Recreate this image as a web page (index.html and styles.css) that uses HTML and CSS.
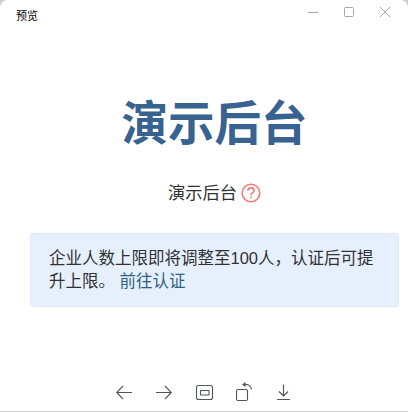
FILE: index.html
```html
<!DOCTYPE html>
<html lang="zh-CN">

<head>
  <meta charset="UTF-8" />
  <title>预览</title>
  <link rel="stylesheet" href="styles.css">
</head>

<body>
  <div class="window">
    <div class="titlebar">
      <span class="title">预览</span>
      <div class="controls">
        <svg width="12" height="12" viewBox="0 0 12 12"><path d="M1 6.500h10" /></svg>
        <svg width="12" height="12" viewBox="0 0 12 12"><rect x="1.500" y="1.500" width="9" height="9" rx="1" /></svg>
        <svg width="12" height="12" viewBox="0 0 12 12"><path d="M1 1l10 10M11 1L1 11" /></svg>
      </div>
    </div>

    <div class="content">
      <h1 class="brand">演示后台</h1>
      <div class="subtitle">
        <span>演示后台</span>
        <svg class="help" width="20" height="20" viewBox="0 0 20 20">
          <circle cx="10" cy="10" r="8.800" />
          <path d="M7 7.800c0-1.800 1.300-2.900 3.100-2.900s3 1.100 3 2.600c0 2.200-3.100 2.200-3.100 4.700" />
          <path d="M10 13.400v1.800" />
        </svg>
      </div>
      <div class="notice">企业人数上限即将调整至100人，认证后可提升上限。 <a class="notice-link">前往认证</a></div>
    </div>

    <div class="toolbar">
      <svg width="16" height="18" viewBox="0 0 16 18"><path d="M16 9.500H.7M7 3L.7 9.500 7 16" /></svg>
      <svg width="16" height="18" viewBox="0 0 16 18"><path d="M0 9.500h15.300M9 3l6.300 6.500L9 16" /></svg>
      <svg width="16" height="18" viewBox="0 0 16 18"><rect x=".5" y="2.500" width="16" height="14" rx="2" /><rect x="4.500" y="7.500" width="8.500" height="4.500" rx=".5" /></svg>
      <svg width="16" height="18" viewBox="0 0 16 18"><rect x=".5" y="6.500" width="11" height="11" rx="1.500" /><path d="M8 1.500c4-.5 7 1.500 7.500 5" /><path class="solid" d="M9.500 -1L6 1.500l3.500 2.500z" /></svg>
      <svg width="16" height="18" viewBox="0 0 16 18"><path d="M7.500 1.500v11.500M3 8.500l4.500 4.500L12 8.500M1 16.500h13" /></svg>
    </div>
  </div>
</body>

</html>
```

FILE: styles.css
```css
* {
  box-sizing: border-box;
}

html {
  background-color: #cfcfcf;
}

body {
  margin: 0;
  font-family: "Liberation Sans", "Noto Sans CJK SC", sans-serif;
  color: #303133;
}

.window {
  width: 408px;
  height: 411px;
  display: flex;
  flex-direction: column;
  background-color: #fff;
  border-radius: 8px 8px 0 0;
}

.titlebar {
  height: 33px;
  display: flex;
  justify-content: space-between;
  padding: 6px 17px 0 16px;
}

.title {
  font-size: 11px;
  line-height: 20px;
  color: #000;
}

.controls {
  display: flex;
  gap: 24px;
}

.controls svg {
  fill: none;
  stroke: #a8a8a8;
  stroke-width: 1;
}

.content {
  flex: 1;
  display: flex;
  flex-direction: column;
  align-items: center;
  padding: 0 9px 0 30px;
}

.brand {
  margin: 59px 0 0;
  font-size: 46.5px;
  line-height: 64px;
  font-weight: 700;
  color: #386391;
}

.subtitle {
  margin-top: 25px;
  display: flex;
  align-items: center;
  gap: 4px;
  font-size: 17.3px;
  line-height: 24px;
}

.help {
  fill: none;
  stroke: #f47a78;
  stroke-width: 1.6;
}

.notice {
  width: 100%;
  margin-top: 28px;
  padding: 13px 18px;
  font-size: 16.5px;
  line-height: 23px;
  background-color: #e6f0fd;
  border: 1px solid #dde8f8;
  border-radius: 3px;
}

.notice-link {
  color: #2f6188;
}

.toolbar {
  height: 38px;
  display: flex;
  justify-content: center;
  gap: 24px;
  padding-top: 10px;
}

.toolbar svg {
  fill: none;
  stroke: #50545c;
  stroke-width: 1.1;
  overflow: visible;
}

.toolbar .solid {
  fill: #50545c;
  stroke: none;
}
```
